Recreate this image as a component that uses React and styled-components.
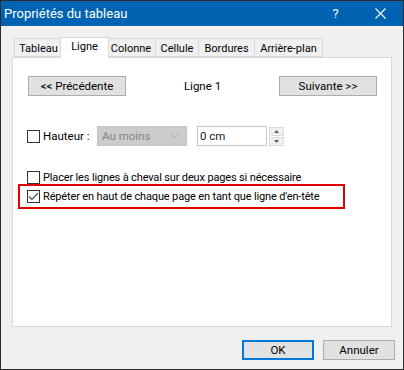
import styled, { createGlobalStyle } from "styled-components"

const GlobalStyle = createGlobalStyle`
  html, body {
    margin: 0;
    padding: 0;
    background: #f0f0f0;
  }
  body {
    font-family: Roboto, "Liberation Sans", Arial, sans-serif;
    font-size: 11px;
    color: #000;
  }
`

const Window = styled.div`
  width: 404px;
  height: 370px;
  box-sizing: border-box;
  border: 1px solid #2b2b2b;
  background: #f0f0f0;
  display: flex;
  flex-direction: column;
`

const TitleBar = styled.div`
  height: 25px;
  flex: none;
  background: #0063b1;
  color: #fff;
  display: flex;
  align-items: center;
  padding-left: 3px;
  font-size: 13px;
`

const Title = styled.div`
  flex: 1;
`

const TitleButton = styled.div`
  width: 45px;
  height: 25px;
  display: flex;
  align-items: center;
  justify-content: center;
  font-size: 13px;
`

const Body = styled.div`
  flex: 1;
  display: flex;
  flex-direction: column;
  padding: 10px 11px 9px 11px;
`

const Tabs = styled.div`
  display: flex;
  align-items: flex-end;
  height: 21px;
  padding-left: 2px;
  position: relative;
  z-index: 1;
`

const Tab = styled.div`
  box-sizing: border-box;
  flex: none;
  width: ${p => (p.$active ? p.$w + 4 : p.$w)}px;
  height: ${p => (p.$active ? "21px" : "19px")};
  margin: ${p => (p.$active ? "0 -2px -1px -3px" : "0 0 0 -1px")};
  padding-top: ${p => (p.$active ? "2px" : "3px")};
  text-align: center;
  border: 1px solid #d9d9d9;
  border-bottom: ${p => (p.$active ? "none" : "1px solid #d9d9d9")};
  background: ${p => (p.$active ? "#fff" : "#f0f0f0")};
  position: relative;
  z-index: ${p => (p.$active ? 2 : 0)};
  white-space: nowrap;
  font-size: 11px;
  &:first-child {
    margin-left: 0;
  }
`

const Panel = styled.div`
  height: 270px;
  box-sizing: border-box;
  background: #fff;
  border: 1px solid #d9d9d9;
  padding: 18px 14px 0 14px;
  display: flex;
  flex-direction: column;
`

const NavRow = styled.div`
  display: flex;
  align-items: center;
  justify-content: space-between;
  padding-left: 1px;
`

const Button = styled.div`
  box-sizing: border-box;
  width: ${p => p.$w || 98}px;
  height: 20px;
  display: flex;
  align-items: center;
  justify-content: center;
  background: #e1e1e1;
  border: ${p => (p.$default ? "2px solid #0078d7" : "1px solid #adadad")};
  font-size: 11.5px;
`

const RowLabel = styled.div`
  font-size: 11.5px;
  width: ${p => (p.$w ? `${p.$w}px` : "auto")};
`

const HeightRow = styled.div`
  display: flex;
  align-items: center;
  margin-top: 30px;
`

const CheckRow = styled.label`
  display: flex;
  align-items: center;
  height: 16px;
  font-size: 11px;
  letter-spacing: -0.15px;
  margin-top: ${p => p.$mt || 0}px;
`

const Box = styled.span`
  box-sizing: border-box;
  width: 13px;
  height: 13px;
  flex: none;
  border: 1px solid #333;
  background: #fff;
  margin-right: 3px;
  display: flex;
  align-items: center;
  justify-content: center;
`

const Select = styled.div`
  box-sizing: border-box;
  width: 90px;
  height: 20px;
  background: #cccccc;
  border: 1px solid #c4c4c4;
  color: #838383;
  display: flex;
  align-items: center;
  justify-content: space-between;
  padding: 0 6px 0 4px;
  font-size: 11.5px;
`

const Field = styled.div`
  box-sizing: border-box;
  width: 70px;
  height: 20px;
  margin-left: 10px;
  border: 1px solid #c8c8c8;
  background: #fff;
  display: flex;
  align-items: center;
  padding-left: 2px;
  font-size: 11.5px;
  color: #1a1a2a;
`

const Spinner = styled.div`
  display: flex;
  flex-direction: column;
  gap: 1px;
  margin-left: 2px;
`

const SpinButton = styled.div`
  box-sizing: border-box;
  width: 15px;
  height: 9px;
  background: #f0f0f0;
  border: 1px solid #dcdcdc;
  display: flex;
  align-items: center;
  justify-content: center;
`

const Highlight = styled.div`
  box-sizing: border-box;
  width: 327px;
  height: 25px;
  margin: -1px 0 0 -9px;
  border: 2px solid #e00000;
  padding-left: 7px;
  display: flex;
  align-items: center;
  font-size: 11px;
  letter-spacing: -0.15px;
`

const Footer = styled.div`
  display: flex;
  justify-content: flex-end;
  gap: 9px;
  margin-top: 13px;
  margin-right: -3px;
`

const tabs = [
  { label: "Tableau", w: 49 },
  { label: "Ligne", w: 45 },
  { label: "Colonne", w: 50 },
  { label: "Cellule", w: 44 },
  { label: "Bordures", w: 57 },
  { label: "Arrière-plan", w: 69 },
]

const Check = () => (
  <svg width="11" height="9" viewBox="0 0 11 9">
    <path d="M1 4.5 L4 7.5 L10 1" fill="none" stroke="#4d4d4d" strokeWidth="1.2" />
  </svg>
)

const Triangle = ({ up }) => (
  <svg width="5" height="3" viewBox="0 0 5 3">
    <path d={up ? "M0 3 L2.5 0 L5 3 Z" : "M0 0 L2.5 3 L5 0 Z"} fill="#606060" />
  </svg>
)

const App = () => {
  return (
    <>
      <GlobalStyle />
      <Window>
        <TitleBar>
          <Title>Propriétés du tableau</Title>
          <TitleButton>?</TitleButton>
          <TitleButton>
            <svg width="11" height="11" viewBox="0 0 11 11">
              <path d="M0.5 0.5 L10.5 10.5 M10.5 0.5 L0.5 10.5" stroke="#fff" strokeWidth="1.1" />
            </svg>
          </TitleButton>
        </TitleBar>
        <Body>
          <Tabs>
            {tabs.map(t => (
              <Tab key={t.label} $w={t.w} $active={t.label === "Ligne"}>{t.label}</Tab>
            ))}
          </Tabs>
          <Panel>
            <NavRow>
              <Button>&lt;&lt; Précédente</Button>
              <RowLabel>Ligne 1</RowLabel>
              <Button>Suivante &gt;&gt;</Button>
            </NavRow>
            <HeightRow>
              <Box />
              <RowLabel $w={54}>Hauteur :</RowLabel>
              <Select>
                Au moins
                <svg width="10" height="6" viewBox="0 0 10 6">
                  <path d="M0.5 0.5 L5 5 L9.5 0.5" fill="none" stroke="#a8a8a8" strokeWidth="1" />
                </svg>
              </Select>
              <Field>0 cm</Field>
              <Spinner>
                <SpinButton><Triangle up /></SpinButton>
                <SpinButton><Triangle /></SpinButton>
              </Spinner>
            </HeightRow>
            <CheckRow $mt={23}>
              <Box />
              Placer les lignes à cheval sur deux pages si nécessaire
            </CheckRow>
            <Highlight>
              <Box><Check /></Box>
              Répéter en haut de chaque page en tant que ligne d'en-tête
            </Highlight>
          </Panel>
          <Footer>
            <Button $w={72} $default>OK</Button>
            <Button $w={72}>Annuler</Button>
          </Footer>
        </Body>
      </Window>
    </>
  )
}

export default App
